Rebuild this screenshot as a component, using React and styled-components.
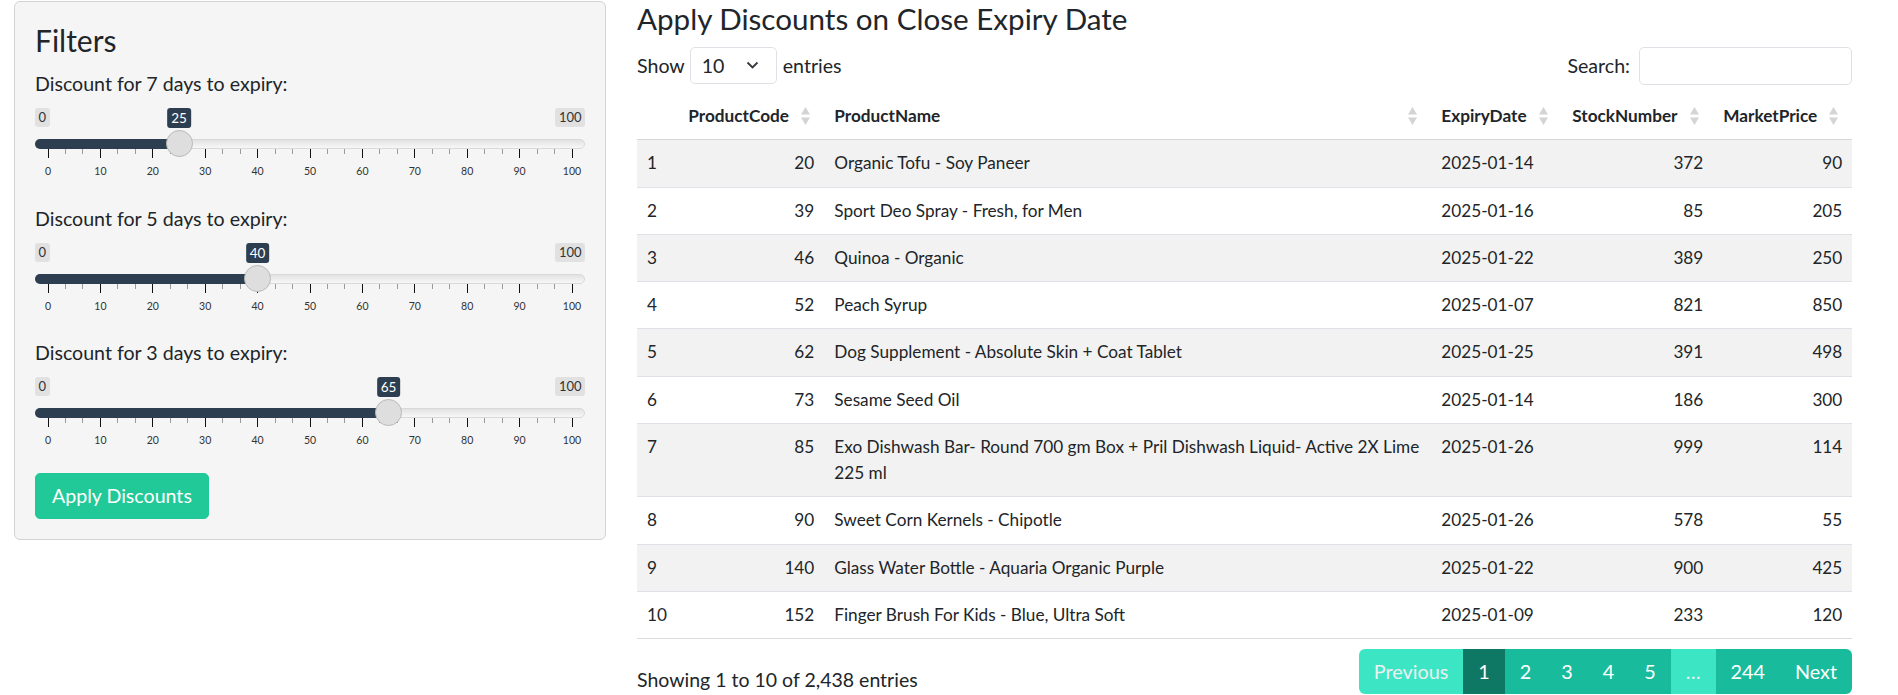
import React from "react";
import styled, { createGlobalStyle } from "styled-components";

const Global = createGlobalStyle`
  html, body { margin: 0; padding: 0; background: #fff; }
  body {
    font-family: Lato, "Liberation Sans", sans-serif;
    color: #212529;
    font-size: 19.6px;
    line-height: 1.5;
    overflow: hidden;
  }
  *, *::before, *::after { box-sizing: border-box; }
`;

const Page = styled.div`
  display: flex;
  align-items: flex-start;
  gap: 31px;
  padding-left: 14px;
`;

const Panel = styled.aside`
  width: 592px;
  margin-top: 1px;
  background: #f5f5f5;
  border: 1px solid #d3d3d3;
  border-radius: 6px;
  padding: 20px;
`;

const PanelTitle = styled.h3`
  margin: 0 0 11px;
  font-size: 30px;
  line-height: 36px;
  font-weight: 400;
`;

const Group = styled.div`
  margin-bottom: 14.7px;
`;

const Label = styled.label`
  display: block;
  font-size: 19.6px;
  line-height: 30px;
`;

const SliderBox = styled.div`
  position: relative;
  height: 90px;
`;

const EdgeTag = styled.span`
  position: absolute;
  top: 9px;
  ${(p) => (p.$side === "left" ? "left: 0;" : "right: 0;")}
  height: 19px;
  padding: 0 3.5px;
  font-size: 13px;
  line-height: 19px;
  color: #333;
  background: #e1e1e1;
  border-radius: 3px;
`;

const ValueTag = styled.span`
  position: absolute;
  top: 9px;
  height: 20px;
  padding: 0 4px;
  transform: translateX(-50%);
  font-size: 13.5px;
  line-height: 20px;
  color: #fff;
  background: #2c3e50;
  border-radius: 3px;
`;

const Track = styled.div`
  position: absolute;
  top: 40px;
  left: 0;
  right: 0;
  height: 10px;
  border-radius: 5px;
  border: 1px solid #d9d9d9;
  background: linear-gradient(to bottom, #e2e2e2, #f7f7f7);
`;

const Fill = styled.div`
  position: absolute;
  top: 40px;
  left: 0;
  height: 10px;
  border-radius: 5px 0 0 5px;
  background: #2c3e50;
`;

const Knob = styled.div`
  position: absolute;
  top: 31px;
  width: 27px;
  height: 27px;
  margin-left: -13.5px;
  border-radius: 50%;
  background: #dedede;
  border: 1px solid #b9b9b9;
`;

const Tick = styled.span`
  position: absolute;
  top: 50px;
  width: 1px;
  height: ${(p) => (p.$major ? "9px" : "5px")};
  background: ${(p) => (p.$major ? "#111" : "#9a9a9a")};
`;

const TickText = styled.span`
  position: absolute;
  top: 66px;
  transform: translateX(-50%);
  font-size: 10.5px;
  line-height: 12px;
  color: #333;
`;

const ActionButton = styled.button`
  font-family: inherit;
  font-size: 19.6px;
  line-height: 30px;
  padding: 7px 16px;
  color: #fff;
  background: #20c997;
  border: 1px solid #20c997;
  border-radius: 5px;
  cursor: pointer;
`;

const Main = styled.main`
  width: 1215px;
`;

const Title = styled.h2`
  margin: 1px 0 10px;
  font-size: 29.6px;
  line-height: 36px;
  font-weight: 400;
`;

const Controls = styled.div`
  display: flex;
  justify-content: space-between;
  align-items: center;
  height: 38px;
`;

const InlineLabel = styled.label`
  display: flex;
  align-items: center;
  gap: ${(p) => p.$gap || "5px"};
  font-size: 19.6px;
  margin-top: -1px;
`;

const SelectBox = styled.div`
  position: relative;
  width: 87px;
  height: 37px;
  border: 1px solid #dee2e6;
  border-radius: 5px;
  background: #fff;
  padding-left: 11px;
  line-height: 35px;
  font-size: 19.6px;
  margin-right: 1px;
  svg { position: absolute; right: 17px; top: 13px; }
`;

const SearchInput = styled.input`
  width: 213px;
  height: 38px;
  border: 1px solid #dee2e6;
  border-radius: 5px;
  background: #fff;
  font-family: inherit;
  font-size: 19.6px;
  padding: 0 10px;
  outline: none;
`;

const Table = styled.table`
  width: 100%;
  margin-top: 8px;
  border-collapse: collapse;
  table-layout: fixed;
  font-size: 17.2px;
  line-height: 26.25px;
  border-bottom: 1px solid #dcdcdc;
`;

const Th = styled.th`
  position: relative;
  padding: 10px 30px 10px 10px;
  font-weight: 700;
  text-align: left;
  white-space: nowrap;
  border-bottom: 1px solid #d6d6d6;
  svg { position: absolute; right: 13px; top: 50%; margin-top: -10px; }
`;

const Tr = styled.tr`
  background: ${(p) => (p.$odd ? "#f2f2f2" : "#fff")};
`;

const Td = styled.td`
  padding: 10px;
  vertical-align: top;
  text-align: ${(p) => (p.$right ? "right" : "left")};
  border-top: 1px solid #dee2e6;
`;

const Footer = styled.div`
  display: flex;
  justify-content: space-between;
  align-items: flex-start;
`;

const Info = styled.div`
  margin-top: 25.5px;
  font-size: 19.5px;
  line-height: 30px;
`;

const Pager = styled.nav`
  display: flex;
  margin-top: 10px;
  border-radius: 6px;
  overflow: hidden;
`;

const PageItem = styled.span`
  padding: 7px 15px;
  font-size: 19.8px;
  line-height: 30.5px;
  color: ${(p) => (p.$muted ? "#ecf0f1" : "#fff")};
  background: ${(p) =>
    p.$active ? "#0f7864" : p.$muted ? "#3ce6c4" : "#18bc9c"};
`;

const SortIcon = () => (
  <svg width="11" height="20" viewBox="0 0 11 20">
    <path d="M5.5 1 L10 8.5 L1 8.5 Z" fill="#d4d4d4" />
    <path d="M1 11.5 L10 11.5 L5.5 19 Z" fill="#d4d4d4" />
  </svg>
);

const Chevron = () => (
  <svg width="13" height="9" viewBox="0 0 13 9">
    <path d="M1.5 1.5 L6.5 6.5 L11.5 1.5" fill="none" stroke="#343a40" strokeWidth="1.8" />
  </svg>
);

const pos = (v) => 13 + (v / 100) * 524;

function RangeSlider({ value }) {
  const ticks = [];
  for (let i = 0; i <= 30; i++) {
    const v = (i * 10) / 3;
    ticks.push(<Tick key={i} $major={i % 3 === 0} style={{ left: pos(v) - 0.5 }} />);
  }
  const labels = [];
  for (let v = 0; v <= 100; v += 10) {
    labels.push(
      <TickText key={v} style={{ left: pos(v) }}>
        {v}
      </TickText>
    );
  }
  return (
    <SliderBox>
      <EdgeTag $side="left">0</EdgeTag>
      <EdgeTag $side="right">100</EdgeTag>
      <Track />
      <Fill style={{ width: pos(value) }} />
      {ticks}
      {labels}
      <Knob style={{ left: pos(value) }} />
      <ValueTag style={{ left: pos(value) }}>{value}</ValueTag>
    </SliderBox>
  );
}

const sliders = [
  { label: "Discount for 7 days to expiry:", value: 25 },
  { label: "Discount for 5 days to expiry:", value: 40 },
  { label: "Discount for 3 days to expiry:", value: 65 },
];

const rows = [
  [1, 20, "Organic Tofu - Soy Paneer", "2025-01-14", 372, 90],
  [2, 39, "Sport Deo Spray - Fresh, for Men", "2025-01-16", 85, 205],
  [3, 46, "Quinoa - Organic", "2025-01-22", 389, 250],
  [4, 52, "Peach Syrup", "2025-01-07", 821, 850],
  [5, 62, "Dog Supplement - Absolute Skin + Coat Tablet", "2025-01-25", 391, 498],
  [6, 73, "Sesame Seed Oil", "2025-01-14", 186, 300],
  [7, 85, "Exo Dishwash Bar- Round 700 gm Box + Pril Dishwash Liquid- Active 2X Lime 225 ml", "2025-01-26", 999, 114],
  [8, 90, "Sweet Corn Kernels - Chipotle", "2025-01-26", 578, 55],
  [9, 140, "Glass Water Bottle - Aquaria Organic Purple", "2025-01-22", 900, 425],
  [10, 152, "Finger Brush For Kids - Blue, Ultra Soft", "2025-01-09", 233, 120],
];

const columns = [
  { w: 41.3, label: "" },
  { w: 146, label: "ProductCode" },
  { w: 607, label: "ProductName" },
  { w: 131, label: "ExpiryDate" },
  { w: 151, label: "StockNumber" },
  { w: 139, label: "MarketPrice" },
];

const pages = [
  { t: "Previous", muted: true },
  { t: "1", active: true },
  { t: "2" },
  { t: "3" },
  { t: "4" },
  { t: "5" },
  { t: "…", muted: true },
  { t: "244" },
  { t: "Next" },
];

export default function App() {
  return (
    <>
      <Global />
      <Page>
        <Panel>
          <PanelTitle>Filters</PanelTitle>
          {sliders.map((s) => (
            <Group key={s.label}>
              <Label>{s.label}</Label>
              <RangeSlider value={s.value} />
            </Group>
          ))}
          <ActionButton>Apply Discounts</ActionButton>
        </Panel>
        <Main>
          <Title>Apply Discounts on Close Expiry Date</Title>
          <Controls>
            <InlineLabel>
              Show
              <SelectBox>
                10
                <Chevron />
              </SelectBox>
              entries
            </InlineLabel>
            <InlineLabel $gap="9px">
              Search:
              <SearchInput type="search" />
            </InlineLabel>
          </Controls>
          <Table>
            <colgroup>
              {columns.map((c, i) => (
                <col key={i} style={{ width: c.w }} />
              ))}
            </colgroup>
            <thead>
              <tr>
                {columns.map((c, i) => (
                  <Th key={i}>
                    {c.label}
                    {i > 0 && <SortIcon />}
                  </Th>
                ))}
              </tr>
            </thead>
            <tbody>
              {rows.map((r, i) => (
                <Tr key={r[0]} $odd={i % 2 === 0}>
                  <Td>{r[0]}</Td>
                  <Td $right>{r[1]}</Td>
                  <Td>{r[2]}</Td>
                  <Td>{r[3]}</Td>
                  <Td $right>{r[4]}</Td>
                  <Td $right>{r[5]}</Td>
                </Tr>
              ))}
            </tbody>
          </Table>
          <Footer>
            <Info>Showing 1 to 10 of 2,438 entries</Info>
            <Pager>
              {pages.map((p) => (
                <PageItem key={p.t} $active={p.active} $muted={p.muted}>
                  {p.t}
                </PageItem>
              ))}
            </Pager>
          </Footer>
        </Main>
      </Page>
    </>
  );
}
